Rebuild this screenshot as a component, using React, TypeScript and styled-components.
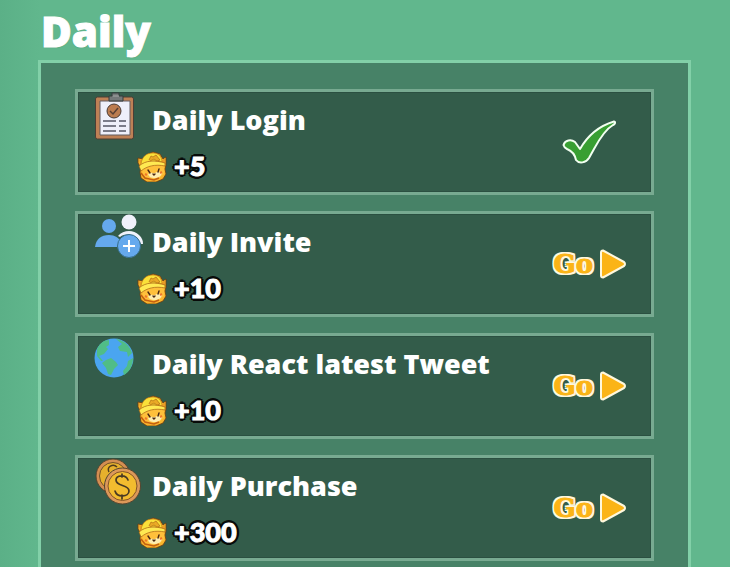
import React from "react";
import styled, { createGlobalStyle } from "styled-components";

const GlobalStyle = createGlobalStyle`
  * { box-sizing: border-box; }
  body { margin: 0; background: #61b78d; }
`;

const Page = styled.main`
  min-height: 100vh;
  display: flex;
  flex-direction: column;
  padding: 0 39px 0 38px;
  background: linear-gradient(90deg, #5bb087 0, #61b78d 40px);
  font-family: "Open Sans", Lato, sans-serif;
  font-weight: 800;
  color: #fff;
`;

const Heading = styled.h1`
  margin: 0;
  padding: 7px 0 5px 3px;
  font-size: 42px;
  line-height: 48px;
  font-weight: 800;
  -webkit-text-stroke: 1px #fff;
  text-shadow: 0 1px 1px rgba(48, 112, 82, 0.3);
`;

const Panel = styled.section`
  flex: 1;
  padding: 26px 34px 7px;
  background: #478267;
  border: 3px solid #82d0a8;
  border-bottom: 0;
`;

const TaskList = styled.ul`
  margin: 0;
  padding: 0;
  list-style: none;
  display: grid;
  gap: 16px;
`;

const Card = styled.li`
  display: flex;
  align-items: center;
  justify-content: space-between;
  min-height: 106px;
  padding: 0 24px 0 16px;
  background: #335c4a;
  border: 3px solid #78aa91;
  box-shadow: inset 0 0 0 1px #2b5041;
`;

const Details = styled.div`
  display: grid;
  grid-template-columns: 58px 1fr;
  grid-template-rows: 52px 48px;
`;

const TaskIcon = styled.svg`
  width: 50px;
  height: 50px;
`;

const Title = styled.h2`
  margin: 0;
  padding-top: 10px;
  font-size: 27px;
  line-height: 36px;
  font-weight: 800;
  white-space: nowrap;
`;

const Reward = styled.p`
  grid-column: 1 / -1;
  display: flex;
  align-items: center;
  gap: 6px;
  margin: 0;
  padding: 0 0 4px 42px;
  font-size: 27px;
  line-height: 32px;
`;

const CatIcon = styled.svg`
  width: 32px;
  height: 32px;
`;

const Amount = styled.span`
  font-family: Lato, sans-serif;
  font-weight: 900;
  -webkit-text-stroke: 1px #fff;
  text-shadow:
    3px 0 #080b09, -3px 0 #080b09, 0 3px #080b09, 0 -3px #080b09,
    2px 2px #080b09, -2px 2px #080b09, 2px -2px #080b09, -2px -2px #080b09;
`;

const GoButton = styled.button`
  display: flex;
  align-items: center;
  gap: 6px;
  padding: 0;
  border: 0;
  background: none;
  cursor: pointer;
  color: #fbb416;
  font-family: "DejaVu Serif", serif;
  font-size: 26px;
  line-height: 32px;
  font-weight: 700;
  -webkit-text-stroke: 1px #fbb416;
  text-shadow:
    2px 0 #fff8dd, -2px 0 #fff8dd, 0 2px #fff8dd, 0 -2px #fff8dd,
    2px 2px #fff8dd, -2px 2px #fff8dd, 2px -2px #fff8dd, -2px -2px #fff8dd;
`;

const Arrow = styled.svg`
  width: 28px;
  height: 32px;
`;

const Done = styled.svg`
  width: 54px;
  height: 44px;
  margin-right: 11px;
`;

function Cat() {
  return (
    <CatIcon viewBox="0 0 32 32" aria-hidden="true">
      <path d="M2 8l5 1 3-4 7-3 7 2 3 5 3-2v8l-1 4 1 5-3 5-7 3H11l-6-4-1-6 1-4-3-5z" fill="#f8b52c" stroke="#6c3b10" strokeWidth=".8" />
      <path d="m3 9 4 2-2 5zm26-1-3 3 3 4z" fill="#ea9b27" />
      <path d="M6 18c6-4 14-4 22-2v8l-6 5-10 1-5-4z" fill="#ffc03b" />
      <path d="M12 24c3-2 5-1 7-1 4-2 6-1 7 0-1 4-4 5-8 5-3 0-5-1-6-4z" fill="#ffedaf" />
      <path d="M5 14C6 6 11 3 17 3c6 0 9 4 9 9-7-2-14-1-20 4z" fill="#fae039" stroke="#b87114" strokeWidth=".6" />
      <path d="M3 16c7-6 16-6 26-3v3C19 14 11 16 5 21z" fill="#ffe952" stroke="#a65f12" strokeWidth=".7" />
      <path d="m13 10 2-4 2 1 3-2 4 5-3 1-3-2-4 2" fill="#eaaa26" stroke="#b97518" strokeWidth=".8" />
      <path d="m12 20 2 3m9-4-1 3m-5 2 1 1 1-1" fill="none" stroke="#4a2712" strokeWidth="1.4" strokeLinecap="round" />
      <path d="m9 24 2 1m13-2 2-1" stroke="#ed762b" strokeWidth="2" />
      <path d="m5 23 4 5 9 2 5-2" fill="none" stroke="#c45f11" strokeWidth="1.6" />
    </CatIcon>
  );
}

function LoginIcon() {
  return (
    <TaskIcon viewBox="0 0 50 50" aria-hidden="true">
      <rect x="1.5" y="5" width="38" height="42" rx="2" fill="#be8055" stroke="#4c3e35" />
      <path d="M6 9h30v34H6z" fill="#eeeffa" stroke="#625c60" />
      <path d="M15 9V4h3V1h7v3h4v5z" fill="#747879" stroke="#353d3d" />
      <path d="M19 4h6" stroke="#a3a5a5" />
      <circle cx="20" cy="19" r="7" fill="#bb7c50" stroke="#493a34" />
      <path d="m16 19 3 3 5-6" fill="none" stroke="#594034" strokeWidth="1.5" />
      <path d="M9 29h13m3 0h7M9 34h13m3 0h7M9 39h13m3 0h7" stroke="#555765" strokeWidth="1.5" />
    </TaskIcon>
  );
}

function InviteIcon() {
  return (
    <TaskIcon viewBox="0 0 50 50" aria-hidden="true">
      <circle cx="15" cy="12" r="7" fill="#65a9ed" />
      <path d="M1 33c1-8 6-12 14-12 6 0 10 3 12 7l-4 5z" fill="#65a9ed" />
      <circle cx="35" cy="8" r="7.5" fill="#f0f2fb" />
      <path d="M24 22c5-6 15-7 21-1 3 3 4 5 4 9h-2c-4-9-14-12-21-7z" fill="#f0f2fb" />
      <circle cx="35" cy="32" r="11.5" fill="#65a9ed" stroke="#366d87" />
      <path d="M35 26v12m-6-6h12" stroke="#fff" strokeWidth="2" />
    </TaskIcon>
  );
}

function GlobeIcon() {
  return (
    <TaskIcon viewBox="0 0 50 50" aria-hidden="true">
      <circle cx="20" cy="22" r="19.5" fill="#4aa5f0" />
      <path d="M3 13C6 7 10 4 15 4v5l-3 2 2 2-4 5-5 2 4 5H7l-4-5zM12 24l5-2 5 4 2 3-4 4-3 6-3-1-2-6-4-5zM22 3c8 1 14 7 16 14l-4 4-1-5-7-1-2-4 4-3zM34 25l5-3c0 8-4 14-9 17l-1-4 4-5z" fill="#50bd87" />
    </TaskIcon>
  );
}

function CoinsIcon() {
  return (
    <TaskIcon viewBox="0 0 50 50" aria-hidden="true">
      <circle cx="19" cy="18" r="17" fill="#d48e52" stroke="#554530" />
      <circle cx="19" cy="18" r="13.5" fill="#e6b02d" stroke="#735128" />
      <path d="M23 9c-4-4-11 0-8 5" fill="none" stroke="#503c1e" strokeWidth="1.5" />
      <circle cx="28.5" cy="28" r="18" fill="#dc9859" stroke="#554530" />
      <circle cx="28.5" cy="28" r="14.5" fill="#f2bc2f" stroke="#845329" />
      <path d="M34 22c-2-6-12-5-12 0 0 7 13 4 13 11 0 6-12 7-14 0m7-17v3m0 18v4" fill="none" stroke="#493a23" strokeWidth="1.7" strokeLinecap="round" />
    </TaskIcon>
  );
}

const tasks = [
  { title: "Daily Login", reward: "+5", icon: <LoginIcon />, done: true },
  { title: "Daily Invite", reward: "+10", icon: <InviteIcon />, done: false },
  { title: "Daily React latest Tweet", reward: "+10", icon: <GlobeIcon />, done: false },
  { title: "Daily Purchase", reward: "+300", icon: <CoinsIcon />, done: false },
];

export default function App() {
  return (
    <Page>
      <GlobalStyle />
      <Heading>Daily</Heading>
      <Panel>
        <TaskList>
          {tasks.map((task) => (
            <Card key={task.title}>
              <Details>
                {task.icon}
                <Title>{task.title}</Title>
                <Reward>
                  <Cat />
                  <Amount>{task.reward}</Amount>
                </Reward>
              </Details>
              {task.done ? (
                <Done viewBox="0 0 54 44" role="img" aria-label="Completed">
                  <path d="M1.5 25C3 20 9 19 13 22l5 7C26 15 37 6 52 1.5 54 2 53 4 51 5c-7 4-13 13-19 24l-5 9c-3 5-10 6-13 2-1-5-4-9-9-11-2-1-3-2-3.5-4z" fill="#389f32" stroke="#f2fff1" strokeWidth="2" strokeLinejoin="round" />
                </Done>
              ) : (
                <GoButton type="button">
                  Go
                  <Arrow viewBox="0 0 28 32" aria-hidden="true">
                    <path d="M4 2.5 25 14q2 2 0 4L4 29.500q-2 0-2-2v-23q0-2 2-2z" fill="#fbb416" stroke="#fff8dd" strokeWidth="2" strokeLinejoin="round" />
                  </Arrow>
                </GoButton>
              )}
            </Card>
          ))}
        </TaskList>
      </Panel>
    </Page>
  );
}
